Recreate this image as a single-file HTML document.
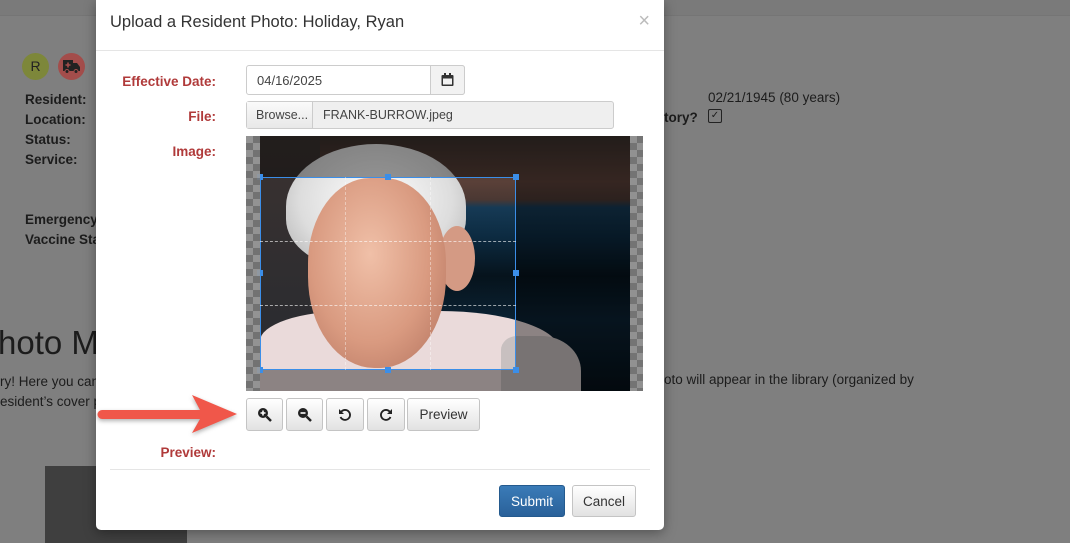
<!DOCTYPE html>
<html><head><meta charset="utf-8">
<style>
*{box-sizing:border-box;margin:0;padding:0}
body{width:1070px;height:543px;overflow:hidden;background:#7f7f7f;font-family:"Liberation Sans",sans-serif;position:relative;color:#1c1c1c}
.bg{position:absolute;font-size:13.5px}
.b{font-weight:bold}
.topbar{position:absolute;left:0;top:0;width:1070px;height:16px;background:#7a7a7a;border-bottom:1px solid #757575}
.modal{position:absolute;left:96px;top:0;width:568px;height:530px;background:#fff;border-radius:0 0 5px 5px;box-shadow:0 3px 12px rgba(0,0,0,.35)}
.lbl{position:absolute;color:#b03a3a;font-weight:bold;font-size:13.5px;text-align:right;width:120px;left:0}
.btn{position:absolute;border:1px solid #c4c4c4;border-radius:3px;background:linear-gradient(#fff,#e2e2e2);display:flex;align-items:center;justify-content:center;font-size:13.5px;color:#333}
.p{position:absolute}
.h{position:absolute;width:6px;height:6px;background:#3b8ee8}
</style></head><body>
<div class="topbar"></div>
<div class="bg" style="left:22px;top:53px;width:27px;height:27px;border-radius:50%;background:#7d873a;color:#222;text-align:center;line-height:27px;font-size:14px">R</div>
<div class="bg" style="left:58px;top:53px;width:27px;height:27px;border-radius:50%;background:#a34d4b"></div>
<svg class="bg" style="left:62px;top:59px" width="19" height="15" viewBox="0 0 19 15"><path d="M1 1h10v11H1zM11 4h4l3 4v4h-7z" fill="#222"/><circle cx="5" cy="12.5" r="2" fill="#222" stroke="#a34d4b"/><circle cx="14" cy="12.5" r="2" fill="#222" stroke="#a34d4b"/><path d="M6 3.5v5M3.5 6h5" stroke="#a34d4b" stroke-width="1.6"/></svg>
<div class="bg b" style="left:25px;top:90px;line-height:20px">Resident:<br>Location:<br>Status:<br>Service:</div>
<div class="bg b" style="left:25px;top:210px;line-height:20px">Emergency:<br>Vaccine Stat</div>
<div class="bg" style="left:708px;top:90px">02/21/1945 (80 years)</div>
<div class="bg b" style="left:664px;top:110px">tory?</div>
<div class="bg" style="left:708px;top:109px;width:14px;height:14px;border:1.5px solid #222;border-radius:2px;font-size:10px;line-height:11px;text-align:center">✓</div>
<div class="bg" style="left:-2px;top:324px;font-size:33px">hoto M</div>
<div class="bg" style="left:0;top:372px;line-height:20px">ry! Here you can<br>esident’s cover p</div>
<div class="bg" style="left:664px;top:372px">oto will appear in the library (organized by</div>
<div class="bg" style="left:45px;top:466px;width:142px;height:77px;background:#3f3f3f"></div>

<div class="modal">
  <div style="position:absolute;left:14px;top:13px;font-size:16.5px;color:#333">Upload a Resident Photo: Holiday, Ryan</div>
  <div style="position:absolute;right:14px;top:10px;font-size:20px;color:#bbb">×</div>
  <div style="position:absolute;left:0;top:50px;width:568px;border-top:1px solid #e5e5e5"></div>
  <div class="lbl" style="top:74px">Effective Date:</div>
  <div style="position:absolute;left:150px;top:65px;width:219px;height:30px;border:1px solid #ccc;border-radius:3px;font-size:13px;padding:7px 10px;color:#444">04/16/2025</div>
  <div style="position:absolute;left:334px;top:65px;width:35px;height:30px;border:1px solid #ccc;border-radius:0 3px 3px 0;background:#f2f2f2"></div>
  <svg style="position:absolute;left:345px;top:73px" width="13" height="13" viewBox="0 0 13 13"><rect x="0.5" y="2" width="12" height="11" rx="1" fill="#333"/><rect x="2" y="5.5" width="9" height="6" fill="#f2f2f2"/><rect x="3" y="0" width="2" height="3" fill="#333"/><rect x="8" y="0" width="2" height="3" fill="#333"/></svg>
  <div class="lbl" style="top:109px">File:</div>
  <div style="position:absolute;left:150px;top:101px;width:368px;height:28px;border:1px solid #ccc;border-radius:3px;background:#efefef;font-size:12.5px;color:#444">
    <div style="position:absolute;left:0;top:0;width:66px;height:26px;background:linear-gradient(#fafafa,#e8e8e8);border-right:1px solid #ccc;padding:6px 9px">Browse...</div>
    <div style="position:absolute;left:76px;top:6px">FRANK-BURROW.jpeg</div>
  </div>
  <div class="lbl" style="top:144px">Image:</div>
  <div style="position:absolute;left:150px;top:136px;width:397px;height:255px;overflow:hidden;background:repeating-conic-gradient(#777 0 25%,#999 0 50%) 0 0/14px 14px">
    <div class="p" style="left:14px;top:0;width:370px;height:255px;background:linear-gradient(#3a302c 0%,#5a4038 18%,#4a3833 25%,#163a55 28%,#0c2a40 40%,#06131c 55%,#0b2233 72%,#061018 100%)"></div>
    <div class="p" style="left:14px;top:0;width:60px;height:255px;background:linear-gradient(#3b3230,#262a30)"></div>
    <div class="p" style="left:40px;top:8px;width:180px;height:125px;border-radius:50% 50% 40% 40%;background:radial-gradient(ellipse at 50% 45%,#fff,#ddd 60%,#aaa)"></div>
    <div class="p" style="left:193px;top:90px;width:36px;height:65px;border-radius:50%;background:#d49a84"></div>
    <div class="p" style="left:14px;top:175px;width:300px;height:100px;border-radius:30% 40% 0 0;background:#eadada"></div>
    <div class="p" style="left:255px;top:200px;width:80px;height:70px;border-radius:20% 50% 0 0;background:#c8c0c0"></div>
    <div class="p" style="left:62px;top:42px;width:138px;height:190px;border-radius:45% 45% 48% 48%;background:radial-gradient(ellipse at 45% 40%,#f0c0a8,#d99a80 55%,#b0705c)"></div>
    <div class="p" style="left:14px;top:41px;width:256px;height:193px;border:1px solid #3b8ee8;box-shadow:0 0 0 400px rgba(0,0,0,.4)"></div>
    <div class="p" style="left:14px;top:105px;width:256px;border-top:1px dashed rgba(255,255,255,.6)"></div>
    <div class="p" style="left:14px;top:169px;width:256px;border-top:1px dashed rgba(255,255,255,.6)"></div>
    <div class="p" style="left:99px;top:41px;height:193px;border-left:1px dashed rgba(255,255,255,.4)"></div>
    <div class="p" style="left:184px;top:41px;height:193px;border-left:1px dashed rgba(255,255,255,.4)"></div>
    <div class="h" style="left:11px;top:38px"></div><div class="h" style="left:139px;top:38px"></div><div class="h" style="left:267px;top:38px"></div>
    <div class="h" style="left:11px;top:134px"></div><div class="h" style="left:267px;top:134px"></div>
    <div class="h" style="left:11px;top:231px"></div><div class="h" style="left:139px;top:231px"></div><div class="h" style="left:267px;top:231px"></div>
    <div class="p" style="left:0;top:0;width:14px;height:255px;background:repeating-conic-gradient(#777 0 25%,#999 0 50%) 0 0/14px 14px;opacity:.9"></div>
    <div class="p" style="left:384px;top:0;width:13px;height:255px;background:repeating-conic-gradient(#777 0 25%,#999 0 50%) 0 0/14px 14px;opacity:.9"></div>
  </div>
  <div class="btn" style="left:150px;top:398px;width:37px;height:33px"><svg width="15" height="15" viewBox="0 0 15 15"><circle cx="6" cy="6" r="5" fill="#222"/><path d="M9.5 9.5L14 14" stroke="#222" stroke-width="2.5"/><path d="M3.5 6h5M6 3.5v5" stroke="#fff" stroke-width="1.6"/></svg></div>
  <div class="btn" style="left:190px;top:398px;width:37px;height:33px"><svg width="15" height="15" viewBox="0 0 15 15"><circle cx="6" cy="6" r="5" fill="#222"/><path d="M9.5 9.5L14 14" stroke="#222" stroke-width="2.5"/><path d="M3.5 6h5" stroke="#fff" stroke-width="1.6"/></svg></div>
  <div class="btn" style="left:230px;top:398px;width:38px;height:33px"><svg width="14" height="14" viewBox="0 0 14 14"><path d="M3 4A5 5 0 1 1 2.5 9" fill="none" stroke="#222" stroke-width="1.8"/><path d="M1 1v5h5z" fill="#222"/></svg></div>
  <div class="btn" style="left:271px;top:398px;width:38px;height:33px"><svg width="14" height="14" viewBox="0 0 14 14"><path d="M11 4A5 5 0 1 0 11.5 9" fill="none" stroke="#222" stroke-width="1.8"/><path d="M13 1v5h-5z" fill="#222"/></svg></div>
  <div class="btn" style="left:311px;top:398px;width:73px;height:33px">Preview</div>
  <div class="lbl" style="top:445px">Preview:</div>
  <div style="position:absolute;left:14px;top:469px;width:540px;border-top:1px solid #e5e5e5"></div>
  <div class="btn" style="left:403px;top:485px;width:66px;height:32px;background:linear-gradient(#3a7bb8,#2a619a);border-color:#245a8e;color:#fff">Submit</div>
  <div class="btn" style="left:476px;top:485px;width:64px;height:32px">Cancel</div>
</div>
<svg style="position:absolute;left:96px;top:392px" width="144" height="46" viewBox="0 0 144 46"><g filter="drop-shadow(0 2px 2px rgba(0,0,0,.3))"><path d="M6 18H104L96 3L141 22L96 41L104 27H6a4.5 4.5 0 0 1 0-9z" fill="#f0574a"/></g></svg>
</body></html>
